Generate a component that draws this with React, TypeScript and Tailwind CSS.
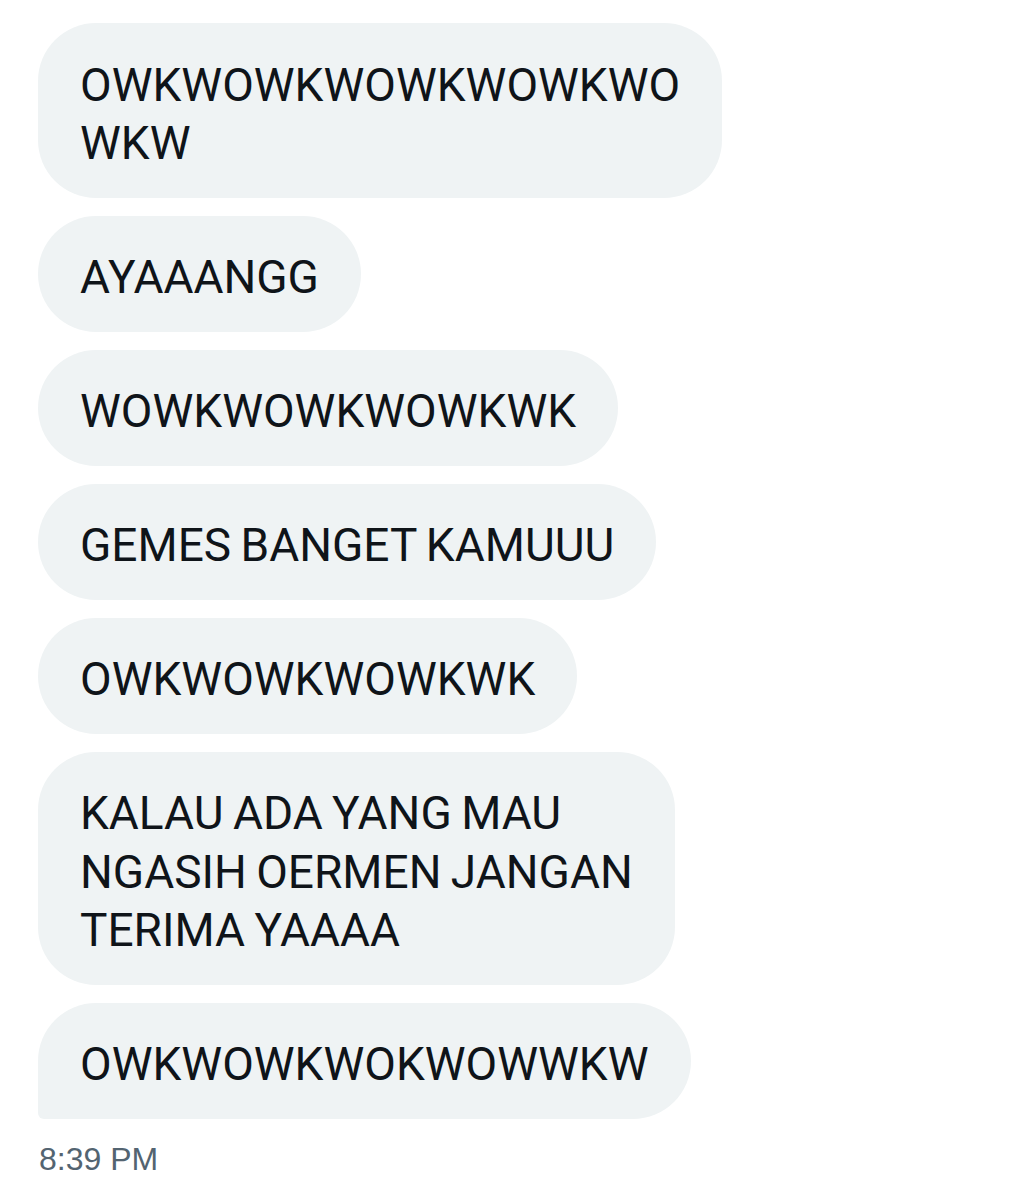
const messages: string[][] = [
  ["OWKWOWKWOWKWOWKWO", "WKW"],
  ["AYAAANGG"],
  ["WOWKWOWKWOWKWK"],
  ["GEMES BANGET KAMUUU"],
  ["OWKWOWKWOWKWK"],
  ["KALAU ADA YANG MAU", "NGASIH OERMEN JANGAN", "TERIMA YAAAA"],
  ["OWKWOWKWOKWOWWKW"],
];

export default function App() {
  return (
    <div className="min-h-[1200px] bg-white pl-[38px] pt-[23px] font-['Roboto',sans-serif] text-[#0f1419]">
      <div className="flex flex-col items-start gap-[18px]">
        {messages.map((lines, i) => (
          <div
            key={i}
            className={
              i === messages.length - 1
                ? "rounded-[58px] rounded-bl-[6px] bg-[#eff3f4] pt-[32.5px] pb-[25px] pl-[42px] pr-[42px] text-[46px] leading-[58.5px] [word-spacing:-2px]"
                : "rounded-[58px] bg-[#eff3f4] pt-[32.5px] pb-[25px] pl-[42px] pr-[42px] text-[46px] leading-[58.5px] [word-spacing:-2px]"
            }
          >
            {lines.map((l, j) => (
              <div key={j} className="whitespace-nowrap">
                {l}
              </div>
            ))}
          </div>
        ))}
      </div>
      <div className="mt-[24px] pl-[1px] font-['Liberation_Sans',sans-serif] text-[32px] leading-[32px] text-[#536471]">
        8:39 PM
      </div>
    </div>
  );
}
